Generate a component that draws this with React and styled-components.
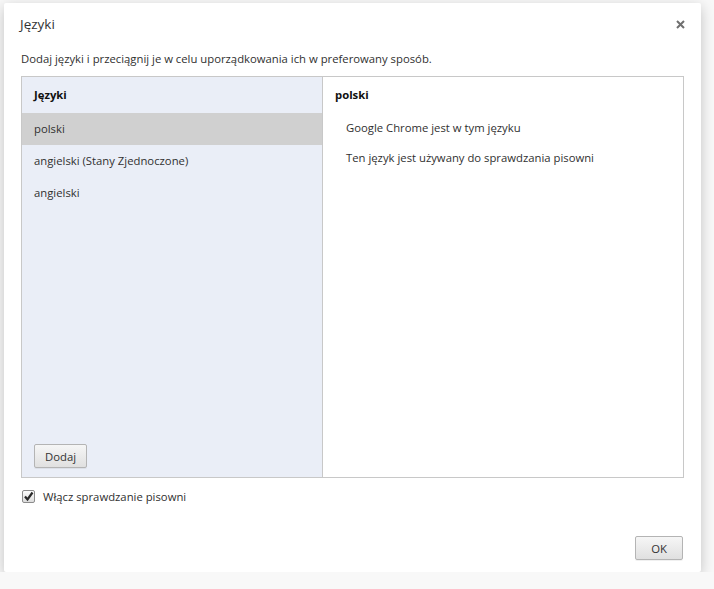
import React from 'react'
import styled, { createGlobalStyle } from 'styled-components'

const Global = createGlobalStyle`
    html, body {
        margin: 0;
        background: #f8f8f8;
        font-family: "Open Sans", "Noto Sans", sans-serif;
        color: #303030;
    }
`

const languages = ['polski', 'angielski (Stany Zjednoczone)', 'angielski']
const details = ['Google Chrome jest w tym języku', 'Ten język jest używany do sprawdzania pisowni']

export default function App() {
    return (
        <>
            <Global />
            <Page>
                <Dialog>
                    <Header>
                        <Title>Języki</Title>
                        <Close aria-label='close'>
                            <svg width='9' height='9' viewBox='0 0 9 9'>
                                <path d='M1 1 L8 8 M8 1 L1 8' stroke='#6f6f6f' strokeWidth='2' />
                            </svg>
                        </Close>
                    </Header>
                    <Description>Dodaj języki i przeciągnij je w celu uporządkowania ich w preferowany sposób.</Description>
                    <Panels>
                        <LangList>
                            <ListHeader>Języki</ListHeader>
                            {languages.map((l, i) => <LangRow key={l} selected={i === 0}>{l}</LangRow>)}
                            <ListFooter>
                                <Button>Dodaj</Button>
                            </ListFooter>
                        </LangList>
                        <Detail>
                            <ListHeader>polski</ListHeader>
                            {details.map(d => <DetailRow key={d}>{d}</DetailRow>)}
                        </Detail>
                    </Panels>
                    <CheckRow>
                        <CheckBox>
                            <svg width='11' height='11' viewBox='0 0 11 11'>
                                <path d='M2 5.5 L4.5 8.5 L9.5 1.5' stroke='#2a2a2a' strokeWidth='2.2' fill='none' />
                            </svg>
                        </CheckBox>
                        Włącz sprawdzanie pisowni
                    </CheckRow>
                    <Footer>
                        <Button wide>OK</Button>
                    </Footer>
                </Dialog>
            </Page>
        </>
    )
}

const Page = styled.div`
    padding: 3px 0 0 4px;
`
const Dialog = styled.div`
    width: 697px;
    height: 569px;
    box-sizing: border-box;
    background: #fff;
    border-radius: 2px;
    box-shadow: 0 4px 14px rgba(0, 0, 0, 0.22);
    display: flex;
    flex-direction: column;
    padding: 0 17px;
`
const Header = styled.div`
    display: flex;
    align-items: center;
    justify-content: space-between;
    height: 18px;
    margin-top: 12px;
`
const Title = styled.span`
    font-size: 13.5px;
    color: #333;
    margin-left: -1px;
`
const Close = styled.span`
    display: flex;
    margin-right: -1px;
`
const Description = styled.div`
    margin-top: 18px;
    height: 16px;
    line-height: 16px;
    font-size: 11.3px;
`
const Panels = styled.div`
    margin-top: 9px;
    height: 402px;
    box-sizing: border-box;
    border: 1px solid #c8c8c8;
    display: flex;
`
const LangList = styled.div`
    width: 301px;
    box-sizing: border-box;
    background: #eaeef7;
    border-right: 1px solid #c8c8c8;
    display: flex;
    flex-direction: column;
`
const ListHeader = styled.div`
    height: 36px;
    line-height: 36px;
    padding-left: 12px;
    font-size: 11.3px;
    font-weight: 700;
    color: #111;
`
const LangRow = styled.div`
    height: 32px;
    line-height: 32px;
    padding-left: 12px;
    font-size: 11.3px;
    background: ${({ selected }) => selected ? '#d0d0d0' : 'transparent'};
`
const ListFooter = styled.div`
    margin-top: auto;
    padding: 0 0 9px 12px;
`
const Button = styled.button`
    font-family: inherit;
    font-size: 11.3px;
    color: #333;
    height: 24px;
    min-width: ${({ wide }) => wide ? '48px' : '53px'};
    padding: 0 10px;
    border: 1px solid #b4b4b4;
    border-radius: 2px;
    background: linear-gradient(#f6f6f6, #e0e0e0);
    box-shadow: 0 1px 0 rgba(0, 0, 0, 0.06);
`
const Detail = styled.div`
    flex: 1;
    display: flex;
    flex-direction: column;
`
const DetailRow = styled.div`
    height: 30px;
    line-height: 30px;
    padding-left: 23px;
    font-size: 11.3px;
    &:first-of-type { margin-top: -1px; }
`
const CheckRow = styled.label`
    margin-top: 10px;
    height: 16px;
    display: flex;
    align-items: center;
    gap: 8px;
    font-size: 11.3px;
    margin-left: 1px;
`
const CheckBox = styled.span`
    width: 11px;
    height: 11px;
    border: 1px solid #8c8c8c;
    border-radius: 2px;
    background: linear-gradient(#fdfdfd, #dcdcdc);
    display: flex;
    align-items: center;
    justify-content: center;
`
const Footer = styled.div`
    margin-top: 32px;
    display: flex;
    justify-content: flex-end;
    padding-right: 1px;
`
